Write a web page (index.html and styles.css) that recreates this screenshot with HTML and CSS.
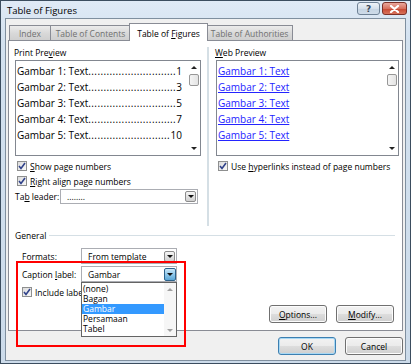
FILE: index.html
```html
<html>

<head>
    <meta name="viewport" content="width=device-width, initial-scale=1.0">
    <title>Table of Figures</title>
    <link rel="stylesheet" href="styles.css">
</head>

<body>
    <div class="window">
        <div class="titlebar">
            <span class="title">Table of Figures</span>
            <div class="caption-btns">
                <span class="cbtn help">?</span>
                <span class="cbtn close">
                    <svg width="11" height="8" viewBox="0 0 11 8">
                        <path d="M2 1 L9 7 M9 1 L2 7" stroke="#fff" stroke-width="2.2" stroke-linecap="round" />
                    </svg>
                </span>
            </div>
        </div>

        <div class="client">
            <div class="tabs">
                <span class="tab t-index"><span>Index</span></span>
                <span class="tab t-toc"><span>Table of Contents</span></span>
                <span class="tab t-tof active"><span>Table of <u>F</u>igures</span></span>
                <span class="tab t-toa"><span>Table of Authorities</span></span>
            </div>

            <div class="panel">
                <div class="previews">
                    <div class="col">
                        <div class="label">Print Pre<u>v</u>iew</div>
                        <div class="listbox">
                            <div class="items">
                                <div class="entry"><span>Gambar 1: Text<span class="dots">.............................</span></span><span>1</span></div>
                                <div class="entry"><span>Gambar 2: Text<span class="dots">.............................</span></span><span>3</span></div>
                                <div class="entry"><span>Gambar 3: Text<span class="dots">.............................</span></span><span>5</span></div>
                                <div class="entry"><span>Gambar 4: Text<span class="dots">.............................</span></span><span>7</span></div>
                                <div class="entry"><span>Gambar 5: Text<span class="dots">...........................</span></span><span>10</span></div>
                            </div>
                            <div class="vscroll">
                                <span class="arr up"></span>
                                <span class="thumb"></span>
                                <span class="arr down"></span>
                            </div>
                        </div>
                        <div class="check first">
                            <span class="box"><svg width="8" height="8" viewBox="0 0 8 8"><path d="M1 4 L3 6.5 L7 1" fill="none" stroke="#30428a" stroke-width="1.6" /></svg></span>
                            <span><u>S</u>how page numbers</span>
                        </div>
                        <div class="check">
                            <span class="box"><svg width="8" height="8" viewBox="0 0 8 8"><path d="M1 4 L3 6.5 L7 1" fill="none" stroke="#30428a" stroke-width="1.6" /></svg></span>
                            <span><u>R</u>ight align page numbers</span>
                        </div>
                        <div class="field leader">
                            <span class="field-label">Ta<u>b</u> leader:</span>
                            <div class="combo wide">
                                <span class="combo-text">........</span>
                                <span class="drop"><span class="tri"></span></span>
                            </div>
                        </div>
                    </div>

                    <div class="sep"></div>

                    <div class="col">
                        <div class="label"><u>W</u>eb Preview</div>
                        <div class="listbox">
                            <div class="items links">
                                <div class="entry"><a>Gambar 1: Text</a></div>
                                <div class="entry"><a>Gambar 2: Text</a></div>
                                <div class="entry"><a>Gambar 3: Text</a></div>
                                <div class="entry"><a>Gambar 4: Text</a></div>
                                <div class="entry"><a>Gambar 5: Text</a></div>
                            </div>
                            <div class="vscroll">
                                <span class="arr up"></span>
                                <span class="thumb"></span>
                                <span class="arr down"></span>
                            </div>
                        </div>
                        <div class="check first">
                            <span class="box"><svg width="8" height="8" viewBox="0 0 8 8"><path d="M1 4 L3 6.5 L7 1" fill="none" stroke="#30428a" stroke-width="1.6" /></svg></span>
                            <span>Use <u>h</u>yperlinks instead of page numbers</span>
                        </div>
                    </div>
                </div>

                <div class="general">
                    <div class="group-title"><span>General</span><span class="line"></span></div>
                    <div class="field fmt">
                        <span class="field-label">Forma<u>t</u>s:</span>
                        <div class="combo">
                            <span class="combo-text">From template</span>
                            <span class="drop"><span class="tri"></span></span>
                        </div>
                    </div>
                    <div class="field cap">
                        <span class="field-label">Caption <u>l</u>abel:</span>
                        <div class="combo open">
                            <span class="combo-text">Gambar</span>
                            <span class="drop pressed"><span class="tri"></span></span>
                            <div class="dropdown">
                                <div class="opts">
                                    <div class="opt">(none)</div>
                                    <div class="opt">Bagan</div>
                                    <div class="opt selected">Gambar</div>
                                    <div class="opt">Persamaan</div>
                                    <div class="opt">Tabel</div>
                                </div>
                                <div class="dd-scroll">
                                    <span class="arr up light"></span>
                                    <span class="arr down light"></span>
                                </div>
                            </div>
                        </div>
                    </div>
                    <div class="check incl">
                        <span class="box"><svg width="8" height="8" viewBox="0 0 8 8"><path d="M1 4 L3 6.5 L7 1" fill="none" stroke="#30428a" stroke-width="1.6" /></svg></span>
                        <span>Include label and number</span>
                    </div>
                    <div class="panel-btns">
                        <button class="btn"><u>O</u>ptions...</button>
                        <button class="btn"><u>M</u>odify...</button>
                    </div>
                </div>

                <div class="callout"></div>
            </div>

            <div class="dialog-btns">
                <button class="btn default">OK</button>
                <button class="btn">Cancel</button>
            </div>
        </div>
    </div>
</body>

</html>
```

FILE: styles.css
```css
body {
    margin: 0;
    padding: 0;
    background-color: #fff;
    font-family: "Open Sans", "Noto Sans", sans-serif;
    font-size: 8.5px;
    color: #000;
}

u {
    text-decoration: underline;
    text-underline-offset: 1px;
}

.window {
    width: 411px;
    height: 364px;
    box-sizing: border-box;
    border: 1px solid #3b4d5f;
    background: linear-gradient(#dfeaf6, #d3e1ef 40px, #ccdbea);
    padding: 0 4px 2px 4px;
    display: flex;
    flex-direction: column;
}

.titlebar {
    height: 20px;
    display: flex;
    align-items: center;
    justify-content: space-between;
}

.title {
    font-size: 9.5px;
    margin-left: 2px;
    margin-top: 2px;
}

.caption-btns {
    display: flex;
    gap: 2px;
    margin-right: -1px;
    margin-top: -2px;
}

.cbtn {
    width: 23px;
    height: 13px;
    box-sizing: border-box;
    border-radius: 3px;
    display: flex;
    justify-content: center;
    align-items: center;
}

.help {
    border: 1px solid #6f8296;
    background: linear-gradient(#eef3f8, #d5e0eb 50%, #c4d3e2 51%, #cfdce9);
    color: #3c4a5a;
    font-weight: bold;
    font-size: 9px;
    font-family: "DejaVu Sans", sans-serif;
}

.close {
    width: 25px;
    border: 1px solid #7b3028;
    background: linear-gradient(#eaa89d, #d7715f 50%, #c64630 51%, #d8735c);
}

.client {
    flex: 1;
    border: 1px solid #7f8f9f;
    background-color: #f0f0f0;
    padding: 4px 2px 5px 2px;
    display: flex;
    flex-direction: column;
}

/* tabs */
.tabs {
    display: flex;
    align-items: flex-end;
    height: 17px;
    padding-left: 1px;
    position: relative;
    z-index: 1;
}

.tab {
    height: 15px;
    box-sizing: border-box;
    border: 1px solid #898c95;
    border-bottom: none;
    background: linear-gradient(#ececec, #d9d9d9 50%, #cfcfcf);
    color: #707070;
    display: flex;
    justify-content: center;
    align-items: center;
    padding-top: 1px;
    white-space: nowrap;
}

.t-index {
    width: 42px;
}

.t-toc {
    width: 81px;
    margin-left: -1px;
}

.t-tof {
    width: 79px;
    margin-left: -2px;
}

.t-toa {
    width: 87px;
    margin-left: -2px;
}

.tab.active {
    height: 18px;
    margin-bottom: -1px;
    background: #fff;
    color: #000;
    position: relative;
    z-index: 2;
}

/* panel */
.panel {
    position: relative;
    border: 1px solid #898c95;
    background-color: #fff;
    padding: 6px 3px 7px 6px;
}

.previews {
    display: grid;
    grid-template-columns: 186px 1px 183px;
    column-gap: 7px;
}

.previews .sep {
    background-color: #d5dfe5;
    margin-left: -1px;
    margin-bottom: -22px;
}

.label {
    height: 11px;
    line-height: 11px;
    margin-bottom: 2px;
    margin-left: -1px;
}

.listbox {
    height: 96px;
    box-sizing: border-box;
    border: 1px solid #828790;
    display: flex;
}

.items {
    flex: 1;
    padding: 2px 6px 0 1px;
    font-size: 10px;
    overflow: hidden;
}

.entry {
    height: 16px;
    line-height: 16px;
    display: flex;
    justify-content: space-between;
    white-space: nowrap;
}

.entry .dots {
    letter-spacing: 0.4px;
}

.links .entry a {
    color: #2424ff;
    text-decoration: underline;
    text-underline-offset: 1px;
}

.vscroll {
    width: 12px;
    display: flex;
    flex-direction: column;
    align-items: center;
    padding-top: 5px;
}

.vscroll .thumb {
    width: 10px;
    height: 12px;
    box-sizing: border-box;
    border: 1px solid #979797;
    border-radius: 2px;
    background: linear-gradient(90deg, #f4f4f4, #e4e4e4);
    margin-top: 5px;
}

.arr {
    width: 0;
    height: 0;
    border-left: 3px solid transparent;
    border-right: 3px solid transparent;
}

.arr.up {
    border-bottom: 3px solid #222;
}

.arr.down {
    border-top: 3px solid #222;
}

.vscroll .arr.down {
    margin-top: auto;
    margin-bottom: 5px;
}

.arr.light.up {
    border-bottom-color: #a0a0a0;
}

.arr.light.down {
    border-top-color: #a0a0a0;
}

/* checkbox rows */
.check {
    display: flex;
    align-items: center;
    height: 12px;
    margin-top: 3px;
    margin-left: 2px;
    gap: 3px;
    white-space: nowrap;
}

.check.first {
    margin-top: 4px;
}

.box {
    width: 10px;
    height: 10px;
    box-sizing: border-box;
    border: 1px solid #8e8f8f;
    background: linear-gradient(135deg, #dcdcdc, #f8f8f8);
    display: flex;
    justify-content: center;
    align-items: center;
    flex-shrink: 0;
}

/* fields + combos */
.field {
    display: flex;
    align-items: center;
}

.leader {
    margin-top: 2px;
}

.leader .field-label {
    width: 45px;
}

.combo {
    position: relative;
    height: 15px;
    width: 96px;
    box-sizing: border-box;
    border: 1px solid #abadb3;
    background-color: #fff;
    display: flex;
    align-items: center;
}

.combo.wide {
    width: 138px;
}

.combo-text {
    flex: 1;
    padding-left: 6px;
    white-space: nowrap;
}

.drop {
    width: 11px;
    height: 11px;
    box-sizing: border-box;
    margin-right: 1px;
    border: 1px solid #8c8c8c;
    border-radius: 2px;
    background: linear-gradient(#f6f6f6, #e2e2e2 50%, #d0d0d0);
    display: flex;
    justify-content: center;
    align-items: center;
}

.drop .tri {
    border-left: 3px solid transparent;
    border-right: 3px solid transparent;
    border-top: 3px solid #111;
}

.drop.pressed {
    width: 12px;
    height: 13px;
    margin-right: 0;
    border-color: #2c628b;
    background: linear-gradient(#c9e6f7, #8ec7ea 50%, #5aa6d6);
}

/* general group */
.general {
    margin-top: 26px;
    padding-right: 2px;
}

.group-title {
    display: flex;
    align-items: center;
    height: 11px;
    gap: 3px;
}

.group-title .line {
    flex: 1;
    height: 1px;
    background-color: #d5dfe5;
    margin-right: 2px;
}

.fmt,
.cap {
    margin-left: 7px;
}

.fmt {
    margin-top: 7px;
}

.cap {
    margin-top: 2px;
}

.fmt .field-label,
.cap .field-label {
    width: 59px;
}

.fmt .combo,
.cap .combo {
    height: 16px;
}

.check.incl {
    margin-left: 7px;
    margin-top: 4px;
}

.dropdown {
    position: absolute;
    top: 15px;
    left: -1px;
    width: 96px;
    height: 55px;
    box-sizing: border-box;
    border: 1px solid #646464;
    background-color: #fff;
    display: flex;
    z-index: 3;
}

.opts {
    flex: 1;
    padding-top: 1px;
}

.opt {
    height: 10px;
    line-height: 10px;
    padding-left: 1px;
}

.opt.selected {
    background-color: #3399ff;
    color: #fff;
}

.dd-scroll {
    width: 12px;
    background-color: #f6f6f6;
    display: flex;
    flex-direction: column;
    align-items: center;
    justify-content: space-between;
    padding: 5px 0 4px;
}

/* buttons */
.btn {
    font-family: inherit;
    font-size: 8.5px;
    color: #000;
    height: 18px;
    box-sizing: border-box;
    border: 1px solid #707070;
    border-radius: 3px;
    background: linear-gradient(#f2f2f2, #ebebeb 50%, #dddddd 51%, #cfcfcf);
    box-shadow: inset 0 0 0 1px #fcfcfc;
    padding: 0;
}

.panel-btns {
    display: flex;
    justify-content: flex-end;
    gap: 9px;
    margin-top: 7px;
    padding-right: 3px;
}

.panel-btns .btn {
    width: 58px;
}

.dialog-btns {
    display: flex;
    justify-content: flex-end;
    gap: 9px;
    margin-top: 6px;
}

.dialog-btns .btn {
    width: 58px;
}

.btn.default {
    border-color: #3c7fb1;
    box-shadow: inset 0 0 0 1px #a8d8f4;
}

.callout {
    position: absolute;
    left: 7px;
    top: 220px;
    width: 170px;
    height: 86px;
    box-sizing: border-box;
    border: 2px solid #ff0000;
    z-index: 4;
}
```
